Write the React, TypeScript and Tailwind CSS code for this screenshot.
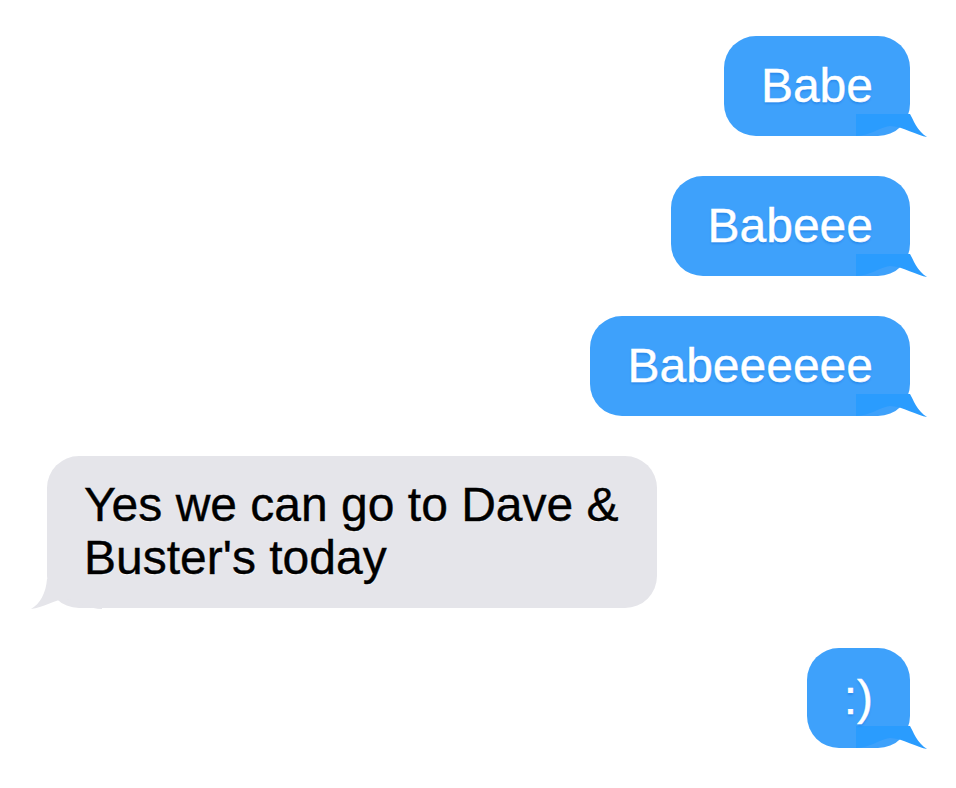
import React from "react";

const SentTail = () => (
  <svg
    className="absolute right-[-17px] bottom-[-1px]"
    width="71"
    height="23"
    viewBox="0 0 71 23"
  >
    <path
      d="M0 0 H54 C57 5 61 17 71 23 C62 22 46 12 34 12 C24 13 14 22 0 22 Z"
      fill="#2a9cfe"
    />
  </svg>
);

const ReceivedTail = () => (
  <svg
    className="absolute left-[-16px] bottom-[-1px]"
    width="71"
    height="30"
    viewBox="0 0 71 30"
  >
    <path
      d="M71 0 H16 C15 14 9 25 0 30 C12 29 26 19 36 20 C47 22 58 30 71 30 Z"
      fill="#e5e5ea"
    />
  </svg>
);

const Sent = ({ text }: { text: string }) => (
  <div className="flex justify-end">
    <div className="relative rounded-[32px] bg-[#3ea1fb] px-[37px] pt-[23px] pb-[24px] text-[48px] leading-[53px] text-white [text-shadow:0_2px_2px_rgba(20,110,220,0.45)] [-webkit-text-stroke:0.4px_white]">
      <span className="relative z-10">{text}</span>
      <SentTail />
    </div>
  </div>
);

export default function App() {
  return (
    <div
      className="min-h-[788px] w-[956px] bg-white pt-[36px] pl-[47px] pr-[46px] flex flex-col gap-[40px]"
      style={{ fontFamily: '"Liberation Sans", Arial, Helvetica, sans-serif' }}
    >
      <Sent text="Babe" />
      <Sent text="Babeee" />
      <Sent text="Babeeeeee" />
      <div className="flex justify-start">
        <div className="relative w-[610px] rounded-[32px] bg-[#e5e5ea] px-[37px] pt-[22px] pb-[24px] text-[48px] leading-[53px] text-black [text-shadow:0_1px_1px_rgba(255,255,255,0.9)] [-webkit-text-stroke:0.4px_black]">
          <span className="relative z-10">
            <span className="whitespace-nowrap">Yes we can go to Dave &amp;</span>
            <br />
            <span className="whitespace-nowrap">Buster's today</span>
          </span>
          <ReceivedTail />
        </div>
      </div>
      <Sent text=":)" />
    </div>
  );
}
